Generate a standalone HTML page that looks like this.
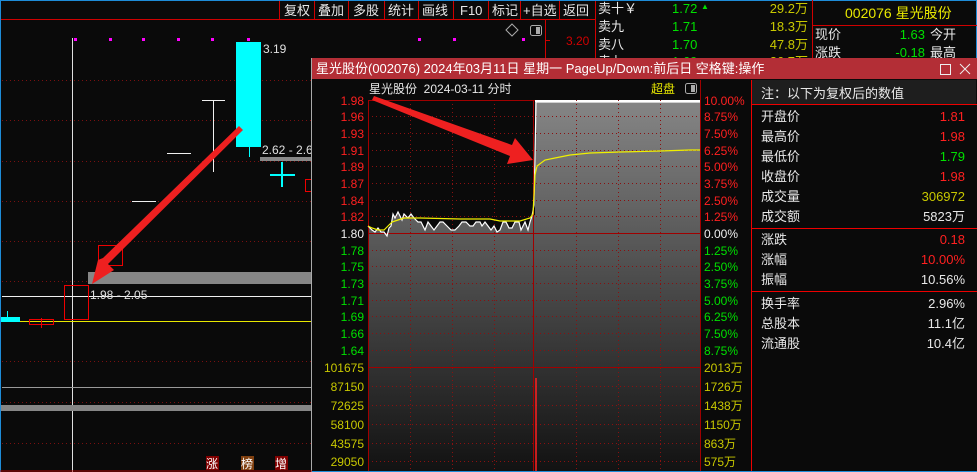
<!DOCTYPE html>
<html><head><meta charset="utf-8">
<style>
html,body{margin:0;padding:0;background:#0a0a0a;}
body{width:977px;height:472px;overflow:hidden;position:relative;font-family:"Liberation Sans","Noto Sans CJK SC",sans-serif;}
svg text{font-family:"Liberation Sans","Noto Sans CJK SC",sans-serif;}
</style></head><body>
<svg width="977" height="472" viewBox="0 0 977 472" xmlns="http://www.w3.org/2000/svg" style="position:absolute;left:0;top:0">
<defs>
<linearGradient id="g" x1="0" y1="0" x2="0" y2="1">
<stop offset="0" stop-color="#868686"/><stop offset="0.5" stop-color="#4a4a4a"/><stop offset="1" stop-color="#121212"/>
</linearGradient>
</defs>
<rect width="977" height="472" fill="#0a0a0a"/>
<line x1="0" y1="0.5" x2="977" y2="0.5" stroke="#1e8cd8"/>
<line x1="0.5" y1="0" x2="0.5" y2="472" stroke="#1e8cd8"/>
<line x1="976.5" y1="0" x2="976.5" y2="472" stroke="#1e8cd8"/>
<line x1="1" y1="19.5" x2="596" y2="19.5" stroke="#d00000"/>
<g stroke="#d00000">
<line x1="279.5" y1="1" x2="279.5" y2="19"/><line x1="314.5" y1="1" x2="314.5" y2="19"/><line x1="348.5" y1="1" x2="348.5" y2="19"/><line x1="384.5" y1="1" x2="384.5" y2="19"/><line x1="418.5" y1="1" x2="418.5" y2="19"/><line x1="453.5" y1="1" x2="453.5" y2="19"/><line x1="488.5" y1="1" x2="488.5" y2="19"/><line x1="520.5" y1="1" x2="520.5" y2="19"/><line x1="559.5" y1="1" x2="559.5" y2="19"/><line x1="595.5" y1="1" x2="595.5" y2="60"/>
</g>
<g fill="#e8e8e8" font-size="13">
<text x="284" y="15">复权</text><text x="318" y="15">叠加</text><text x="353" y="15">多股</text><text x="388" y="15">统计</text><text x="422" y="15">画线</text><text x="460" y="15">F10</text><text x="492" y="15">标记</text><text x="523" y="15">+自选</text><text x="563" y="15">返回</text>
</g>
<g stroke="#7a1010" stroke-dasharray="1,3">
<line x1="2" y1="80.5" x2="545" y2="80.5"/><line x1="2" y1="120.5" x2="545" y2="120.5"/><line x1="2" y1="161.5" x2="312" y2="161.5"/><line x1="2" y1="201.5" x2="312" y2="201.5"/><line x1="2" y1="241.5" x2="312" y2="241.5"/><line x1="2" y1="281.5" x2="312" y2="281.5"/><line x1="2" y1="361.5" x2="312" y2="361.5"/><line x1="2" y1="402.5" x2="312" y2="402.5"/><line x1="2" y1="443.5" x2="312" y2="443.5"/>
</g>
<g fill="#ff00ff"><rect x="74" y="38" width="3" height="3"/><rect x="109" y="38" width="3" height="3"/><rect x="142" y="38" width="3" height="3"/><rect x="177" y="38" width="3" height="3"/><rect x="211" y="38" width="3" height="3"/><rect x="247" y="38" width="3" height="3"/><rect x="418" y="38" width="3" height="3"/><rect x="453" y="38" width="3" height="3"/><rect x="522" y="38" width="3" height="3"/></g>
<line x1="72.5" y1="38" x2="72.5" y2="472" stroke="#e0e0e0"/>
<rect x="236" y="42" width="25" height="105" fill="#00ffff"/>
<line x1="249.5" y1="147" x2="249.5" y2="157" stroke="#00ffff"/>
<text x="263" y="53" fill="#e0e0e0" font-size="12">3.19</text>
<text x="262" y="154" fill="#e0e0e0" font-size="12">2.62 - 2.6</text>
<rect x="260" y="157" width="52" height="4" fill="#888"/>
<g stroke="#f0f0f0"><line x1="202" y1="100.5" x2="225" y2="100.5"/><line x1="213.5" y1="100" x2="213.5" y2="172"/><line x1="167" y1="153.5" x2="191" y2="153.5"/><line x1="132" y1="201.5" x2="156" y2="201.5"/><line x1="2" y1="296.5" x2="312" y2="296.5"/></g>
<g stroke="#00ffff" stroke-width="2"><line x1="270" y1="175" x2="295" y2="175"/><line x1="282" y1="162" x2="282" y2="187"/></g>
<rect x="305.5" y="179.5" width="8" height="12" fill="none" stroke="#e00"/>
<rect x="98.5" y="245.5" width="24" height="20" fill="none" stroke="#e00"/>
<rect x="88" y="272" width="224" height="12" fill="#868686"/>
<rect x="64.5" y="285.5" width="24" height="34" fill="none" stroke="#e00"/>
<text x="90" y="299" fill="#e0e0e0" font-size="12">1.98 - 2.05</text>
<line x1="2" y1="321.5" x2="312" y2="321.5" stroke="#e8e800"/>
<rect x="1" y="317" width="19" height="5" fill="#00ffff"/><line x1="7.5" y1="311" x2="7.5" y2="317" stroke="#00ffff"/>
<rect x="29.5" y="319.5" width="24" height="5" fill="none" stroke="#e00"/><line x1="41.5" y1="318" x2="41.5" y2="328" stroke="#e00"/>
<line x1="2" y1="387.5" x2="312" y2="387.5" stroke="#999"/>
<rect x="1" y="405" width="311" height="6" fill="#868686"/>
<line x1="311.5" y1="58" x2="311.5" y2="472" stroke="#aaa"/>
<line x1="0" y1="471" x2="312" y2="471" stroke="#a00"/>
<rect x="206" y="456" width="13" height="14" fill="#800000"/><text x="206" y="468" fill="#fff" font-size="12">涨</text>
<rect x="241" y="456" width="13" height="14" fill="#804010"/><text x="241" y="468" fill="#fff" font-size="12">榜</text>
<rect x="275" y="456" width="13" height="14" fill="#800000"/><text x="275" y="468" fill="#fff" font-size="12">增</text>
<path d="M512 24 L518 30 L512 36 L506 30 Z" fill="none" stroke="#aaa"/>
<rect x="530.5" y="25.5" width="11" height="10" rx="2" fill="none" stroke="#aaa"/><rect x="536" y="27" width="4" height="7" fill="#aaa"/>
<line x1="545.5" y1="20" x2="545.5" y2="60" stroke="#d00000"/><line x1="545" y1="40.5" x2="550" y2="40.5" stroke="#d00000"/>
<text x="566" y="45" fill="#d00000" font-size="12">3.20</text>
<line x1="812.5" y1="0" x2="812.5" y2="60" stroke="#d00000"/>
<line x1="813" y1="25.5" x2="977" y2="25.5" stroke="#d00000"/>
<g font-size="13"><text x="598" y="13" fill="#e8e8e8">卖十￥</text><text x="598" y="31" fill="#e8e8e8">卖九</text><text x="598" y="49" fill="#e8e8e8">卖八</text><text x="598" y="66" fill="#e8e8e8">卖七</text>
<text x="672" y="13" fill="#00e000">1.72</text><text x="701" y="9" fill="#00e000" font-size="8">▲</text><text x="672" y="31" fill="#00e000">1.71</text><text x="672" y="49" fill="#00e000">1.70</text><text x="672" y="66" fill="#00e000">1.69</text>
<g fill="#c8c800" text-anchor="end"><text x="808" y="13">29.2万</text><text x="808" y="31">18.3万</text><text x="808" y="49">47.8万</text><text x="808" y="66">26.7万</text></g>
<text x="845" y="18" fill="#e8e800" font-size="14">002076 星光股份</text>
<text x="815" y="39" fill="#e8e8e8">现价</text><text x="925" y="39" fill="#00e000" text-anchor="end">1.63</text><text x="930" y="39" fill="#e8e8e8">今开</text>
<text x="815" y="57" fill="#e8e8e8">涨跌</text><text x="925" y="57" fill="#00e000" text-anchor="end">-0.18</text><text x="930" y="57" fill="#e8e8e8">最高</text></g>
<rect x="312" y="58" width="665" height="414" fill="#0a0a0a"/>
<rect x="312" y="58" width="665" height="21" fill="#b32e36"/>
<text x="316" y="73" fill="#fff" font-size="13">星光股份(002076) 2024年03月11日 星期一 PageUp/Down:前后日 空格键:操作</text>
<rect x="940.5" y="64.5" width="10" height="10" fill="none" stroke="#eee"/>
<path d="M960 64 L970 74 M970 64 L960 74" stroke="#eee"/>
<rect x="368" y="100" width="332" height="371" fill="url(#g)"/>
<polygon fill="#0a0a0a" points="368,100 535,100 535,215 532,216 530,222 528,230 525,222 523,226 521,230 519,222 515,222 512,228 509,228 506,222 503,222 500,230 497,232 494,226 491,230 488,226 485,222 482,226 480,222 476,222 473,226 470,226 466,222 462,222 459,226 455,230 451,230 447,226 443,222 440,222 437,226 434,230 431,226 428,222 425,230 421,222 418,222 414,218 411,214 408,218 404,214 402,220 398,212 395,218 393,214 391,226 389,228 387,236 384,232 381,232 378,228 375,232 372,230 368,226"/>
<rect x="535" y="100" width="165" height="2" fill="#fff"/>
<g stroke="#8a1010" stroke-dasharray="1,3">
<line x1="368" y1="116.5" x2="700" y2="116.5"/><line x1="368" y1="133.5" x2="700" y2="133.5"/><line x1="368" y1="150.5" x2="700" y2="150.5"/><line x1="368" y1="166.5" x2="700" y2="166.5"/><line x1="368" y1="183.5" x2="700" y2="183.5"/><line x1="368" y1="200.5" x2="700" y2="200.5"/><line x1="368" y1="216.5" x2="700" y2="216.5"/><line x1="368" y1="250.5" x2="700" y2="250.5"/><line x1="368" y1="266.5" x2="700" y2="266.5"/><line x1="368" y1="283.5" x2="700" y2="283.5"/><line x1="368" y1="300.5" x2="700" y2="300.5"/><line x1="368" y1="316.5" x2="700" y2="316.5"/><line x1="368" y1="333.5" x2="700" y2="333.5"/><line x1="368" y1="350.5" x2="700" y2="350.5"/>
<line x1="368" y1="386.5" x2="700" y2="386.5"/><line x1="368" y1="405.5" x2="700" y2="405.5"/><line x1="368" y1="424.5" x2="700" y2="424.5"/><line x1="368" y1="443.5" x2="700" y2="443.5"/><line x1="368" y1="461.5" x2="700" y2="461.5"/>
<line x1="410.5" y1="100" x2="410.5" y2="471"/><line x1="452.5" y1="100" x2="452.5" y2="471"/><line x1="494.5" y1="100" x2="494.5" y2="471"/><line x1="576.5" y1="100" x2="576.5" y2="471"/><line x1="618.5" y1="100" x2="618.5" y2="471"/><line x1="660.5" y1="100" x2="660.5" y2="471"/>
</g>
<g stroke="#a00000"><line x1="368" y1="233.5" x2="700" y2="233.5"/><line x1="368" y1="367.5" x2="700" y2="367.5"/><line x1="533.5" y1="100" x2="533.5" y2="471"/><line x1="368.5" y1="100" x2="368.5" y2="471"/><line x1="700.5" y1="80" x2="700.5" y2="471"/><line x1="368" y1="100.5" x2="535" y2="100.5"/></g>
<line x1="536" y1="378" x2="536" y2="471" stroke="#ff2020" stroke-width="1.5"/>
<polyline fill="none" stroke="#fff" stroke-width="1.2" points="368,226 372,230 375,232 378,228 381,232 384,232 387,236 389,228 391,226 393,214 395,218 398,212 402,220 404,214 408,218 411,214 414,218 418,222 421,222 425,230 428,222 431,226 434,230 437,226 440,222 443,222 447,226 451,230 455,230 459,226 462,222 466,222 470,226 473,226 476,222 480,222 482,226 485,222 488,226 491,230 494,226 497,232 500,230 503,222 506,222 509,228 512,228 515,222 519,222 521,230 523,226 525,222 528,230 530,222 532,216 534,205 535,156 536,102 700,102"/>
<polyline fill="none" stroke="#f0f000" stroke-width="1.2" points="368,226 372,228 378,230 384,230 388,226 392,222 398,220 404,218 420,218 460,219 490,219 500,221 520,221 530,218 533,214 535,175 537,166 545,160 555,158 570,155 590,153 620,152 660,151 690,150 700,150"/>
<text x="369" y="93" fill="#e8e8e8" font-size="12">星光股份&#160;&#160;2024-03-11 分时</text>
<text x="651" y="93" fill="#e8e800" font-size="12">超盘</text>
<rect x="685.5" y="83.5" width="11" height="10" rx="2" fill="none" stroke="#aaa"/><rect x="691" y="85" width="4" height="7" fill="#aaa"/>
<g font-size="12" text-anchor="end">
<g fill="#ff2020"><text x="364" y="105">1.98</text><text x="364" y="121">1.96</text><text x="364" y="138">1.93</text><text x="364" y="155">1.91</text><text x="364" y="171">1.89</text><text x="364" y="188">1.87</text><text x="364" y="205">1.84</text><text x="364" y="221">1.82</text></g>
<text x="364" y="238" fill="#f0f0f0">1.80</text>
<g fill="#00e000"><text x="364" y="255">1.78</text><text x="364" y="271">1.75</text><text x="364" y="288">1.73</text><text x="364" y="305">1.71</text><text x="364" y="321">1.69</text><text x="364" y="338">1.66</text><text x="364" y="355">1.64</text></g>
<g fill="#c8c800"><text x="364" y="372">101675</text><text x="364" y="391">87150</text><text x="364" y="410">72625</text><text x="364" y="429">58100</text><text x="364" y="448">43575</text><text x="364" y="466">29050</text></g>
</g>
<g font-size="12">
<g fill="#ff2020"><text x="704" y="105">10.00%</text><text x="704" y="121">8.75%</text><text x="704" y="138">7.50%</text><text x="704" y="155">6.25%</text><text x="704" y="171">5.00%</text><text x="704" y="188">3.75%</text><text x="704" y="205">2.50%</text><text x="704" y="221">1.25%</text></g>
<text x="704" y="238" fill="#f0f0f0">0.00%</text>
<g fill="#00e000"><text x="704" y="255">1.25%</text><text x="704" y="271">2.50%</text><text x="704" y="288">3.75%</text><text x="704" y="305">5.00%</text><text x="704" y="321">6.25%</text><text x="704" y="338">7.50%</text><text x="704" y="355">8.75%</text></g>
<g fill="#c8c800"><text x="704" y="372">2013万</text><text x="704" y="391">1726万</text><text x="704" y="410">1438万</text><text x="704" y="429">1150万</text><text x="704" y="448">863万</text><text x="704" y="466">575万</text></g>
</g>
<rect x="752" y="80" width="224" height="24" fill="#1e1e1e"/>
<line x1="751.5" y1="80" x2="751.5" y2="472" stroke="#e00"/>
<g stroke="#e00"><line x1="752" y1="104.5" x2="977" y2="104.5"/><line x1="752" y1="228.5" x2="977" y2="228.5"/><line x1="752" y1="291.5" x2="977" y2="291.5"/></g>
<g font-size="13" fill="#e8e8e8">
<text x="761" y="98">注：以下为复权后的数值</text>
<text x="761" y="121">开盘价</text><text x="761" y="141">最高价</text><text x="761" y="161">最低价</text><text x="761" y="181">收盘价</text><text x="761" y="201">成交量</text><text x="761" y="221">成交额</text>
<text x="761" y="244">涨跌</text><text x="761" y="264">涨幅</text><text x="761" y="284">振幅</text>
<text x="761" y="308">换手率</text><text x="761" y="328">总股本</text><text x="761" y="348">流通股</text>
</g>
<g font-size="13" text-anchor="end">
<text x="965" y="121" fill="#ff2020">1.81</text><text x="965" y="141" fill="#ff2020">1.98</text><text x="965" y="161" fill="#00e000">1.79</text><text x="965" y="181" fill="#ff2020">1.98</text><text x="965" y="201" fill="#c8c800">306972</text><text x="965" y="221" fill="#e8e8e8">5823万</text>
<text x="965" y="244" fill="#ff2020">0.18</text><text x="965" y="264" fill="#ff2020">10.00%</text><text x="965" y="284" fill="#e8e8e8">10.56%</text>
<text x="965" y="308" fill="#e8e8e8">2.96%</text><text x="965" y="328" fill="#e8e8e8">11.1亿</text><text x="965" y="348" fill="#e8e8e8">10.4亿</text>
</g>
<line x1="312" y1="471.5" x2="977" y2="471.5" stroke="#1e8cd8"/>
<g fill="#ee2020">
<polygon points="239,126 243,130 108,264 114,270 92,284 98,260 103,258"/>
<polygon points="372,100 374,96 512,145 515,138 533,160 507,164 510,156"/>
</g>
</svg>
</body></html>
